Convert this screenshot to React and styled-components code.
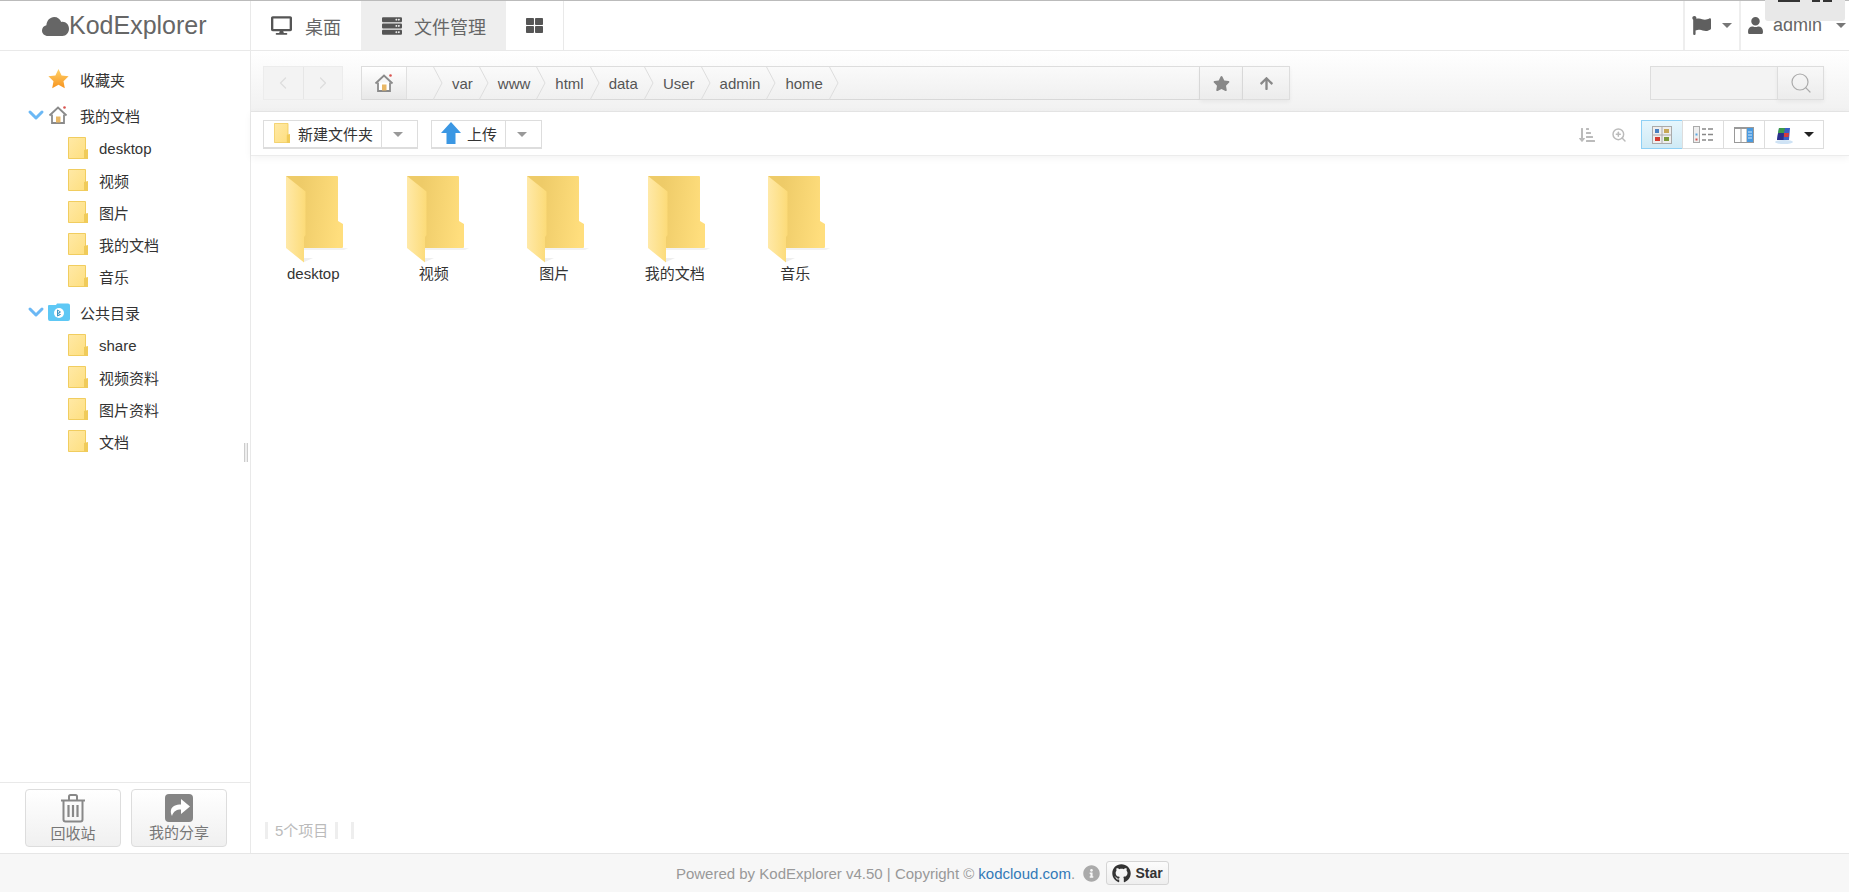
import React from 'react';
import styled, { createGlobalStyle } from 'styled-components';
import { FaDesktop, FaServer, FaThLarge, FaFlag, FaUser, FaStar, FaArrowUp, FaInfoCircle, FaGithub, FaSortAmountDownAlt } from 'react-icons/fa';
import { ChevronLeft, ChevronRight, ChevronDown, Search, ZoomIn } from 'lucide-react';

const Global = createGlobalStyle`
  html, body { margin: 0; padding: 0; height: 100%; overflow: hidden; background: #fff; }
  * { box-sizing: border-box; }
  body { font-family: "Liberation Sans", "Noto Sans CJK SC", sans-serif; font-size: 15px; color: #333; }
`;
const Page = styled.div`display:flex;flex-direction:column;width:1849px;height:892px;position:relative;overflow:hidden;`;
const TopBar = styled.header`display:flex;height:51px;flex:none;border-top:1px solid #bbb;border-bottom:1px solid #e9e9e9;background:#fff;`;
const Logo = styled.div`width:251px;flex:none;display:flex;align-items:center;padding-left:42px;border-right:1px solid #e9e9e9;color:#666;font-size:25px;`;
const NavTab = styled.div`
  height:100%;display:flex;align-items:center;gap:${p=>p.$gap||12}px;padding-left:${p=>p.$pad||20}px;font-size:18px;color:#666;white-space:nowrap;flex:none;
  background:${p=>p.$active?'#eee':'#fff'};width:${p=>p.$w}px;
  ${p=>p.$border?'border-right:1px solid #e9e9e9;':''}
  svg{color:#555;flex:none;}
`;
const Spacer = styled.div`flex:1;`;
const TopRight = styled.div`
  height:100%;display:flex;align-items:center;width:${p=>p.$w}px;padding-left:${p=>p.$pad}px;border-left:2px solid #eee;color:#666;font-size:18px;
  svg{color:#5f5f5f;flex:none;}
`;
const UserName = styled.span`margin-left:9px;`;
const Caret = styled.i`
  display:inline-block;width:0;height:0;border-left:${p=>p.$s||5}px solid transparent;border-right:${p=>p.$s||5}px solid transparent;
  border-top:${p=>p.$s||5}px solid ${p=>p.$c||'#777'};margin-left:${p=>p.$ml||0}px;flex:none;
`;
const Overlay = styled.div`position:absolute;left:1765px;top:0;width:80px;height:21px;background:#e8e8e8;border-radius:0 0 3px 3px;display:flex;align-items:flex-start;padding-left:13px;`;
const Peek = styled.span`display:block;height:2px;background:#333;width:${p=>p.$w}px;margin-right:${p=>p.$mr}px;`;

const Main = styled.div`flex:1;display:flex;min-height:0;`;
const Sidebar = styled.aside`width:251px;flex:none;border-right:1px solid #e9e9e9;display:flex;flex-direction:column;position:relative;`;
const Tree = styled.div`flex:1;padding-top:12px;`;
const Group = styled.div`margin-bottom:4px;`;
const Children = styled.div`margin-top:1px;`;
const Row = styled.div`
  height:32px;display:flex;align-items:center;color:#333;
  padding-left:${p=>p.$child?68:30}px;
  font-size:15px;
`;
const Chevron = styled.span`width:18px;flex:none;display:flex;color:#6bb8f5;svg{margin-left:-6px;flex:none;}`;
const RootIcon = styled.span`width:32px;flex:none;display:flex;align-items:center;`;
const ChildIcon = styled.span`width:31px;flex:none;display:flex;align-items:center;`;
const Handle = styled.div`position:absolute;left:244px;top:392px;width:4px;height:19px;border-left:1px solid #ccc;border-right:1px solid #ccc;background:#eee;`;
const SideBottom = styled.div`height:71px;flex:none;border-top:1px solid #e9e9e9;display:flex;gap:10px;padding:6px 0 0 25px;`;
const SideBtn = styled.div`
  width:96px;height:58px;border:1px solid #ddd;border-radius:4px;background:linear-gradient(#fff,#f0f0f0);
  display:flex;flex-direction:column;align-items:center;padding-top:4px;color:#777;font-size:15px;gap:1px;
  span{line-height:20px;}
`;

const Content = styled.main`flex:1;min-width:0;display:flex;flex-direction:column;`;
const PathBar = styled.div`height:61px;flex:none;display:flex;align-items:flex-start;padding:15px 25px 0 12px;background:linear-gradient(#fff,#f1f1f1);border-bottom:1px solid #e6e6e6;`;
const NavBtns = styled.div`display:flex;width:80px;height:34px;border:1px solid #ececec;background:#f3f3f3;margin-right:18px;`;
const NavBtn = styled.div`flex:1;display:flex;align-items:center;justify-content:center;color:#ddd;& + &{border-left:1px solid #e6e6e6;}`;
const PathGroup = styled.div`display:flex;height:34px;width:839px;border:1px solid #ddd;border-bottom-color:#d8d8d8;background:linear-gradient(#fafafa,#f0f0f0);`;
const HomeCell = styled.div`width:45px;flex:none;display:flex;align-items:center;justify-content:center;background:linear-gradient(#fff,#e8e8e8);border-right:1px solid #e0e0e0;`;
const Crumb = styled.div`
  position:relative;height:100%;display:flex;align-items:center;flex:none;color:#555;font-size:15px;
  padding:0 16px 0 9px;width:${p=>p.$w?p.$w+'px':'auto'};
`;
const CrumbTip = styled.svg`position:absolute;right:0;top:-1px;width:10px;height:34px;`;
const IconBtn = styled.div`width:${p=>p.$w}px;height:34px;flex:none;display:flex;align-items:center;justify-content:center;border:1px solid #ddd;border-left:${p=>p.$nl?'none':'1px solid #ddd'};background:linear-gradient(#f8f8f8,#ececec);color:#888;box-shadow:0 2px 4px rgba(0,0,0,.05);`;
const SearchInput = styled.div`width:127px;height:34px;border:1px solid #ddd;border-right:none;background:#f3f3f3;margin-left:auto;`;
const ActionBar = styled.div`height:44px;flex:none;display:flex;align-items:flex-start;padding:8px 25px 0 12px;background:#fff;border-bottom:1px solid #ececec;box-shadow:0 2px 8px rgba(0,0,0,.05);position:relative;`;
const SplitBtn = styled.div`display:flex;height:29px;width:${p=>p.$w}px;border:1px solid #ddd;border-bottom-width:2px;margin-right:13px;background:#fff;`;
const SplitMain = styled.div`flex:1;display:flex;align-items:center;gap:${p=>p.$gap}px;padding:0 0 2px ${p=>p.$pl}px;color:#333;font-size:15px;`;
const SplitCaret = styled.div`width:${p=>p.$w}px;flex:none;border-left:1px solid #ddd;display:flex;align-items:center;justify-content:center;padding-right:3px;`;
const RightTools = styled.div`margin-left:auto;display:flex;align-items:flex-start;`;
const ToolIcon = styled.div`height:29px;display:flex;align-items:center;color:#bbb;width:${p=>p.$w}px;`;
const ViewBtn = styled.div`
  width:${p=>p.$w}px;height:29px;display:flex;align-items:center;justify-content:center;gap:10px;margin-left:${p=>p.$ml||0}px;
  border:1px solid ${p=>p.$active?'#8fd0f5':'#ddd'};
  background:${p=>p.$active?'linear-gradient(#e6f6fd,#cfeaf5)':'#fff'};
`;
const FileArea = styled.div`flex:1;display:flex;align-items:flex-start;padding:20px 0 0 2px;background:#fff;`;
const FileItem = styled.div`width:120.5px;flex:none;display:flex;flex-direction:column;align-items:center;color:#333;font-size:15px;`;
const FileName = styled.div`line-height:20px;`;
const FolderBox = styled.div`height:88px;width:64px;margin-left:10px;`;
const StatusBar = styled.div`height:31px;flex:none;display:flex;align-items:flex-start;padding-left:14px;color:#bbb;font-size:15px;line-height:17px;`;
const StatusText = styled.span`border-left:3px solid #eee;border-right:3px solid #eee;padding:0 7px;`;
const StatusTail = styled.span`display:block;width:3px;height:17px;background:#eee;margin-left:13px;`;

const Footer = styled.footer`height:39px;flex:none;border-top:1px solid #e6e6e6;background:#f7f7f7;display:flex;align-items:center;justify-content:center;color:#999;font-size:15px;padding-right:4px;`;
const FootLink = styled.a`color:#337ab7;margin-left:4px;`;
const Info = styled.span`display:flex;margin:0 6px 0 8px;color:#aaa;`;
const StarBtn = styled.div`height:24px;width:63px;border:1px solid #d5d5d5;border-radius:3px;background:linear-gradient(#fcfcfc,#eee);display:flex;align-items:center;justify-content:center;gap:4px;color:#333;font-weight:700;font-size:14px;`;

const Cloud = () => (<svg width="27" height="22" viewBox="0 0 27 22"><path d="M6 21C2.5 21 0 18.6 0 15.5c0-2.7 1.8-4.8 4.4-5.3C4.8 5.6 8 2 12.2 2c3.3 0 6 2 7 5 .5-.1.9-.2 1.4-.2 3.600 0 6.400 3 6.400 7 0 4-2.800 7.200-6.600 7.200z" fill="#666"/></svg>);
const HomeIcon = ({s=20}) => (<svg width={s} height={s} viewBox="0 0 20 20"><path d="M1.500 10.500 10 2.500l8.500 8" fill="none" stroke="#8a8a8a" strokeWidth="1.800"/><path d="M4 9.500V18h12V9.500" fill="#fff" stroke="#8a8a8a" strokeWidth="1.800"/><rect x="8" y="11.500" width="4.500" height="6" fill="#e9b765"/><circle cx="16.500" cy="2.500" r="1.300" fill="#d9534f"/></svg>);
const StarIcon = () => (<svg width="21" height="20" viewBox="0 0 21 20"><defs><linearGradient id="st" x1="0" y1="0" x2="0" y2="1"><stop offset="0" stopColor="#ffd36b"/><stop offset="1" stopColor="#f7931e"/></linearGradient></defs><path d="M10.500 0l3.100 6.400 7 .9-5.100 4.900 1.300 7-6.300-3.400-6.300 3.400 1.300-7L.4 7.300l7-.9z" fill="url(#st)"/></svg>);
const ShareDrive = () => (<svg width="22" height="18" viewBox="0 0 22 18"><path d="M1 2h7l1-1.500h11a2 2 0 0 1 2 2V16a2 2 0 0 1-2 2H2a2 2 0 0 1-2-2V3a1 1 0 0 1 1-1z" fill="#5ec8f5"/><circle cx="11" cy="10" r="5" fill="#fff"/><path d="M9.500 7v6M9.500 7l3 2-3 1.500 3 1-3 1.500" stroke="#3f97c4" strokeWidth="1" fill="none"/></svg>);
const SmallFolder = ({w=20,h=22}) => (<svg width={w} height={h} viewBox="0 0 20 22" preserveAspectRatio="none"><defs><linearGradient id="sf" x1="0" y1="0" x2="1" y2="1"><stop offset="0" stopColor="#ffe9a6"/><stop offset="1" stopColor="#fedf80"/></linearGradient></defs><path d="M.5.5h17v21H.5z" fill="url(#sf)" stroke="#f1cd5f"/><path d="M16 13l4-1v10h-4z" fill="#f0cb5a"/></svg>);
const BigFolder = () => (<svg width="64" height="88" viewBox="0 0 64 88"><defs><linearGradient id="fb" x1="0.25" y1="0.2" x2="1" y2="0.3"><stop offset="0" stopColor="#eecb68"/><stop offset="1" stopColor="#ffde7d"/></linearGradient><linearGradient id="ff" x1="0" y1="0" x2="1" y2="0"><stop offset="0" stopColor="#ffe9a8"/><stop offset="1" stopColor="#fcdb78"/></linearGradient></defs><path d="M18 72h44l-4 2H18z" fill="#f2f2f2"/><path d="M18 86l9-4H18z" fill="#eee"/><path d="M0 0h51a1 1 0 0 1 1 1v44l5 3v23a1 1 0 0 1-1 1H10z" fill="url(#fb)"/><path d="M0 0l19.500 15.500V59L18 61v25.500L0 72z" fill="url(#ff)"/></svg>);
const Trash = () => (<svg width="26" height="29" viewBox="0 0 26 29"><path d="M1 6.500h24M9 6V2.500a1.500 1.500 0 0 1 1.500-1.500h5a1.500 1.500 0 0 1 1.500 1.500V6M3.500 7v18.500a2 2 0 0 0 2 2h15a2 2 0 0 0 2-2V7" fill="none" stroke="#888" strokeWidth="2"/><path d="M8.500 11v12M13 11v12M17.500 11v12" stroke="#888" strokeWidth="2.200"/></svg>);
const ShareBox = () => (<svg width="28" height="28" viewBox="0 0 28 28"><rect width="28" height="28" rx="4" fill="#858585"/><path d="M16 5l9 7.500-9 7.500v-4.500c-4.500 0-7.500 1.500-9 6.500-1-2-1.500-4-1-6 1-4 5-5.500 10-5.500z" fill="#fff"/></svg>);
const UploadIcon = () => (<svg width="20" height="22" viewBox="0 0 20 22"><path d="M10 0l10 11h-5.500v11h-9V11H0z" fill="#3b97e3"/></svg>);
const ViewIconGrid = () => (<svg width="20" height="18" viewBox="0 0 20 18"><rect x=".5" y=".5" width="19" height="17" fill="#eee" stroke="#aaa"/><path d="M10 0v18M0 9h20" stroke="#aaa"/><rect x="3" y="3" width="4" height="4" fill="#4a80c0"/><rect x="12" y="3" width="5" height="4" fill="#c7a756"/><rect x="3" y="11" width="5" height="4" fill="#d43a2f"/><rect x="12" y="11" width="5" height="4" fill="#7a9a3a"/></svg>);
const ViewIconList = () => (<svg width="21" height="17" viewBox="0 0 21 17"><rect x=".5" y=".5" width="6" height="16" fill="#eee" stroke="#aaa"/><path d="M9 3h4M15 3h5M9 8.500h4M15 8.500h5M9 14h4M15 14h5" stroke="#888" strokeWidth="1.500"/><rect x="2.500" y="7.500" width="2" height="2" fill="#5aa5e0"/><rect x="2.500" y="12.500" width="2" height="2" fill="#d9534f"/></svg>);
const ViewIconSplit = () => (<svg width="20" height="16" viewBox="0 0 20 16"><rect width="20" height="16" fill="#999"/><rect x="1" y="2" width="5.500" height="13" fill="#fff"/><rect x="7.500" y="2" width="5" height="13" fill="#fff"/><rect x="13" y="1" width="6" height="14" fill="#4a9ae0"/><path d="M14 5h4M14 8h4M14 11h4" stroke="#cfe6fa"/></svg>);
const ThemeIcon = () => (<svg width="20" height="18" viewBox="0 0 20 18"><ellipse cx="10" cy="16" rx="9" ry="2" fill="#cfe3f5"/><path d="M5 2h11l-1 12H3z" fill="#3a5fc4"/><path d="M5 2h6l-1 5H4z" fill="#3b9a4a"/><path d="M10 7h5l-.5 4H9.500z" fill="#d63a3a"/><path d="M4 7h6l-.5 7H3z" fill="#2a2f8a"/></svg>);

const tip = (<CrumbTip viewBox="0 0 10 34"><path d="M0 0l9 17L0 34" fill="none" stroke="#ddd"/></CrumbTip>);
const crumbs = ['var','www','html','data','User','admin','home'];
const mine = ['desktop','视频','图片','我的文档','音乐'];
const shared = ['share','视频资料','图片资料','文档'];

const Leaf = ({ name }) => (<Row $child><ChildIcon><SmallFolder/></ChildIcon>{name}</Row>);

export default function App() {
  return (
    <Page>
      <Global/>
      <TopBar>
        <Logo><Cloud/>KodExplorer</Logo>
        <NavTab $w={110} $gap={13}><FaDesktop size={21}/>桌面</NavTab>
        <NavTab $w={145} $active $gap={12} $pad={21}><FaServer size={20}/>文件管理</NavTab>
        <NavTab $w={58} $border><FaThLarge size={17}/></NavTab>
        <Spacer/>
        <TopRight $w={56} $pad={7}><FaFlag size={19}/><Caret $ml={11}/></TopRight>
        <TopRight $w={110} $pad={6}><FaUser size={17}/><UserName>admin</UserName><Caret $ml={14}/></TopRight>
      </TopBar>
      <Overlay><Peek $w={22} $mr={12}/><Peek $w={8} $mr={3}/><Peek $w={9} $mr={0}/></Overlay>
      <Main>
        <Sidebar>
          <Tree>
            <Group>
              <Row><Chevron/><RootIcon><StarIcon/></RootIcon>收藏夹</Row>
            </Group>
            <Group>
              <Row><Chevron><ChevronDown size={24} strokeWidth={3}/></Chevron><RootIcon><HomeIcon/></RootIcon>我的文档</Row>
              <Children>{mine.map(n=><Leaf key={n} name={n}/>)}</Children>
            </Group>
            <Group>
              <Row><Chevron><ChevronDown size={24} strokeWidth={3}/></Chevron><RootIcon><ShareDrive/></RootIcon>公共目录</Row>
              <Children>{shared.map(n=><Leaf key={n} name={n}/>)}</Children>
            </Group>
          </Tree>
          <Handle/>
          <SideBottom>
            <SideBtn><Trash/><span>回收站</span></SideBtn>
            <SideBtn><ShareBox/><span>我的分享</span></SideBtn>
          </SideBottom>
        </Sidebar>
        <Content>
          <PathBar>
            <NavBtns><NavBtn><ChevronLeft size={20} strokeWidth={1.5}/></NavBtn><NavBtn><ChevronRight size={20} strokeWidth={1.5}/></NavBtn></NavBtns>
            <PathGroup>
              <HomeCell><HomeIcon/></HomeCell>
              <Crumb $w={36}>{tip}</Crumb>
              {crumbs.map(c=><Crumb key={c}>{c}{tip}</Crumb>)}
            </PathGroup>
            <IconBtn $w={43} $nl><FaStar size={17}/></IconBtn>
            <IconBtn $w={47} $nl><FaArrowUp size={15}/></IconBtn>
            <SearchInput/>
            <IconBtn $w={47}><Search size={24} strokeWidth={1.2} color="#aaa"/></IconBtn>
          </PathBar>
          <ActionBar>
            <SplitBtn $w={155}><SplitMain $pl={10} $gap={8}><SmallFolder w={16} h={20}/>新建文件夹</SplitMain><SplitCaret $w={36}><Caret $s={5} $c="#999"/></SplitCaret></SplitBtn>
            <SplitBtn $w={111}><SplitMain $pl={9} $gap={6}><UploadIcon/>上传</SplitMain><SplitCaret $w={36}><Caret $s={5} $c="#999"/></SplitCaret></SplitBtn>
            <RightTools>
              <ToolIcon $w={32}><FaSortAmountDownAlt size={16}/></ToolIcon>
              <ToolIcon $w={30}><ZoomIn size={16} strokeWidth={2.2}/></ToolIcon>
              <ViewBtn $w={42} $active><ViewIconGrid/></ViewBtn>
              <ViewBtn $w={42} $ml={-1}><ViewIconList/></ViewBtn>
              <ViewBtn $w={42} $ml={-1}><ViewIconSplit/></ViewBtn>
              <ViewBtn $w={60} $ml={-1}><ThemeIcon/><Caret $s={5} $c="#222"/></ViewBtn>
            </RightTools>
          </ActionBar>
          <FileArea>
            {mine.map(n=>(<FileItem key={n}><FolderBox><BigFolder/></FolderBox><FileName>{n}</FileName></FileItem>))}
          </FileArea>
          <StatusBar><StatusText>5个项目</StatusText><StatusTail/></StatusBar>
        </Content>
      </Main>
      <Footer>
        Powered by KodExplorer v4.50 | Copyright ©<FootLink>kodcloud.com</FootLink>.
        <Info><FaInfoCircle size={17}/></Info>
        <StarBtn><FaGithub size={19}/>Star</StarBtn>
      </Footer>
    </Page>
  );
}
